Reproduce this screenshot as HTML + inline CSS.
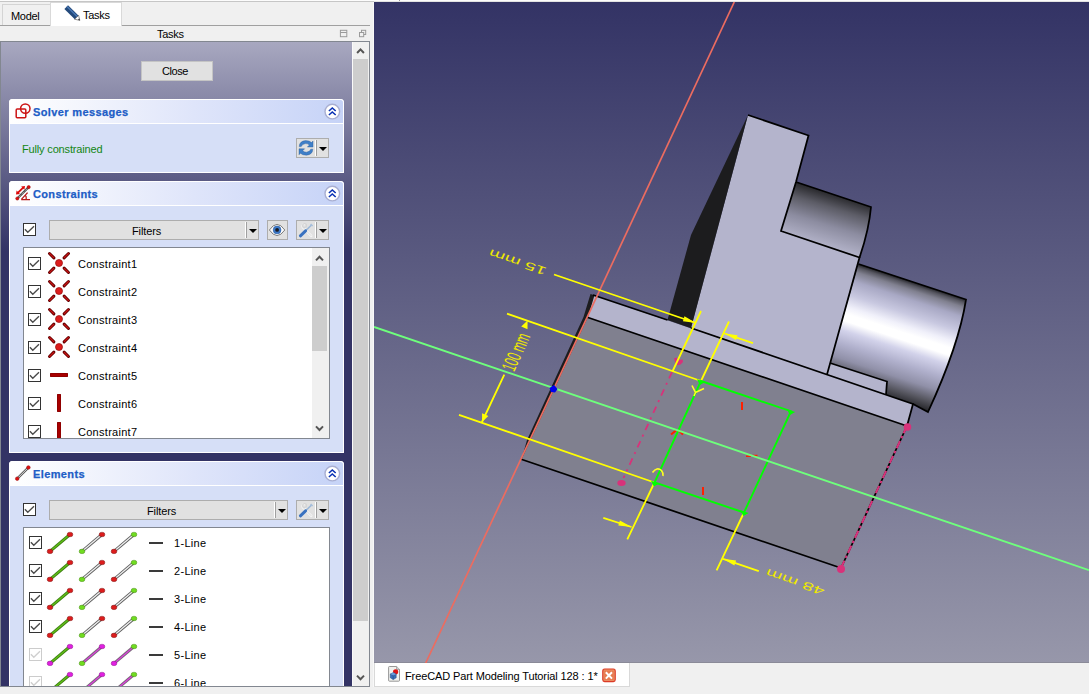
<!DOCTYPE html>
<html>
<head>
<meta charset="utf-8">
<title>FreeCAD</title>
<style>
*{box-sizing:border-box;margin:0;padding:0}
html,body{width:1089px;height:694px;overflow:hidden;background:#f0f0f0}
body{position:relative;font-family:"Liberation Sans",sans-serif;font-size:11px;color:#000}
.a{position:absolute}
.t{position:absolute;white-space:nowrap;line-height:13px;height:13px}
/* top strip */
#topw{left:0;top:0;width:1089px;height:1px;background:#fcfcfc}
#topg{left:0;top:1px;width:1089px;height:1px;background:#c6c6c6}
/* tabs */
#tabline{left:0;top:25px;width:370px;height:1px;background:#a0a0a0}
#tabModel{left:2px;top:4px;width:49px;height:21px;border:1px solid #d4d4d4;border-bottom:none;background:#f0f0f0}
#tabTasks{left:50px;top:2px;width:72px;height:24px;background:#fff;border:1px solid #d9d9d9;border-bottom:none}
/* panel frame */
#frame{left:0;top:41px;width:370px;height:646px;border:1px solid #828790;background:#333365;overflow:hidden}
#grad{left:0;top:0;width:351px;height:644px;background:linear-gradient(to bottom,#a8a8c0 0px,#333365 209px,#333365 100%)}
#vsb{left:351px;top:0;width:17px;height:644px;background:#f0f0f0;box-shadow:inset 1px 0 0 #fafafa}
#vsbthumb{left:1px;top:17px;width:15px;height:562px;background:#cdcdcd}
/* buttons */
.btn{position:absolute;background:#e1e1e1;border:1px solid #adadad}
.sepw{position:absolute;width:1px;background:#fff}
.sepg{position:absolute;width:1px;background:#a0a0a0}
.dd{position:absolute;width:0;height:0;border-left:4px solid transparent;border-right:4px solid transparent;border-top:4.5px solid #000}
/* groups */
.ghead{position:absolute;left:8px;width:335px;height:24px;border-radius:4px 4px 0 0;box-shadow:inset 0 1px 0 #fff,inset -1px 0 0 #fff,inset 1px 0 0 #fff;background:linear-gradient(to right,#ffffff 0%,#f4f6fd 20%,#dfe5fa 55%,#c6d3f7 100%)}
.gbody{position:absolute;left:8px;width:335px;background:#d6dff7;border:1px solid #fff}
.gtitle{position:absolute;font-weight:bold;color:#215dc6;-webkit-text-stroke:0.25px #215dc6;left:24px;top:7px;line-height:13px;white-space:nowrap}
.chev{position:absolute;left:314px;top:3px;width:18px;height:18px}
.cb{position:absolute;width:13px;height:13px;border:1px solid #333;background:#fff}
.cb.dis{border-color:#cccccc}
.list{position:absolute;left:22px;width:307px;background:#fff;border:1px solid #828790;overflow:hidden}
.row{position:absolute;left:0;width:306px;height:28px}
#tModel{letter-spacing:-0.29px}#tTasks,#tTitle{letter-spacing:-0.27px}#tClose{letter-spacing:-0.42px}
#gSolver{letter-spacing:0.37px}#gConstr{letter-spacing:0.35px}#gElem{letter-spacing:0.38px}
#tFully{letter-spacing:-0.16px}#tFil1,#tFil2{letter-spacing:-0.12px}
.tc{letter-spacing:0.28px}.te{letter-spacing:0.32px}#tDoc{letter-spacing:-0.11px}
</style>
</head>
<body>
<div class="a" id="topw"></div><div class="a" id="topg"></div><div class="a" style="left:374px;top:1px;width:715px;height:1px;background:#e2e2e2"></div><div class="a" style="left:399px;top:0;width:1px;height:1px;background:#9a9a9a"></div>
<div class="a" id="tabline"></div>
<div class="a" id="tabModel"></div>
<div class="a" id="tabTasks"></div>
<div class="t" id="tModel" style="left:11px;top:10px">Model</div>
<div class="t" id="tTasks" style="left:83px;top:9px">Tasks</div>
<div class="t" id="tTitle" style="left:157px;top:28px">Tasks</div>
<svg class="a" style="left:60px;top:3px" width="24" height="21" viewBox="60 3 24 21"><line x1="66.2" y1="7.2" x2="76.6" y2="17.4" stroke="#244a7c" stroke-width="5.2"/><line x1="67" y1="6.6" x2="77.4" y2="16.8" stroke="#4a78b4" stroke-width="1.4"/><polygon points="74.6,19.2 78.6,15.4 79.8,20.4" fill="#fff" stroke="#444" stroke-width="0.6"/><polygon points="78,19.4 79.2,18.4 79.9,20.5" fill="#222"/></svg><svg class="a" style="left:338px;top:28px" width="32" height="11" viewBox="338 28 32 11"><rect x="340.4" y="30.3" width="6.4" height="6.4" fill="none" stroke="#9a9a9a" stroke-width="1"/><line x1="340.4" y1="32.5" x2="346.8" y2="32.5" stroke="#9a9a9a" stroke-width="1"/><rect x="361.5" y="30.3" width="4.2" height="4.2" fill="none" stroke="#9a9a9a" stroke-width="1"/><rect x="359.5" y="32.5" width="4.2" height="4.2" fill="#f0f0f0" stroke="#9a9a9a" stroke-width="1"/></svg>
<div class="a" id="frame">
  <div class="a" id="grad"></div>
  <div class="a" id="vsb"><div class="a" id="vsbthumb"></div>
  <svg class="a" style="left:0;top:0" width="17" height="644" viewBox="352 42 17 644"><path d="M357.1,53 L360.5,49.4 L363.9,53" fill="none" stroke="#555" stroke-width="2"/><path d="M357,675.6 L360.5,679.2 L364,675.6" fill="none" stroke="#555" stroke-width="2"/></svg>
  </div>
  <div class="btn" id="closeBtn" style="left:139.5px;top:19px;width:72px;height:20px;border-color:#c4c4c4"></div>
  <div class="t" id="tClose" style="left:161px;top:23px">Close</div>
<div class="ghead" style="top:57px"><svg class="a" style="left:5px;top:3px" width="20" height="18" viewBox="14 102 20 18"><rect x="16.2" y="109" width="9.6" height="8.8" rx="1" fill="none" stroke="#cc1414" stroke-width="1.5"/><circle cx="25.3" cy="108.6" r="4.7" fill="none" stroke="#cc1414" stroke-width="1.5"/></svg><div class="gtitle" id="gSolver">Solver messages</div><svg class="chev" viewBox="0 0 18 18"><circle cx="9.3" cy="9.6" r="7.3" fill="#fff" stroke="#a9afd2" stroke-width="1.4"/><path d="M5.9 9 L9.3 6 L12.7 9 M5.9 13 L9.3 10 L12.7 13" fill="none" stroke="#0a32b4" stroke-width="1.6"/></svg></div>
<div class="gbody" style="top:81px;height:50px"></div>
<div class="t" id="tFully" style="left:21px;top:101px;color:#128612">Fully constrained</div>
<div class="btn" style="left:295px;top:96px;width:33px;height:20px"><div class="sepw" style="left:18px;top:1px;height:16px"></div><div class="sepg" style="left:19px;top:1px;height:16px"></div><div class="dd" style="left:21.5px;top:8px"></div><svg class="a" style="left:1px;top:0px" width="16" height="18" viewBox="298 139 16 18"><path d="M299.2,146.6 Q299.4,141.2 305.6,140.6 Q309.6,140.6 311.6,142.6 L313,141 L313,147 L307.4,147 L309.4,145 Q307.6,143.4 305.4,143.6 Q302,144 301.2,146.6 Z" fill="#3f7fc8" stroke="#2a5a9a" stroke-width="0.4"/><path d="M312.8,149.2 Q312.6,154.6 306.4,155.2 Q302.4,155.2 300.4,153.2 L299,154.8 L299,148.8 L304.6,148.8 L302.6,150.8 Q304.4,152.4 306.6,152.2 Q310,151.8 310.8,149.2 Z" fill="#3f7fc8" stroke="#2a5a9a" stroke-width="0.4"/></svg></div>
<div class="ghead" style="top:139px"><svg class="a" style="left:5px;top:3px" width="20" height="18" viewBox="14 184 20 18"><line x1="17.5" y1="198.3" x2="28.5" y2="187.3" stroke="#444" stroke-width="2.2"/><line x1="17.5" y1="198.3" x2="28.5" y2="187.3" stroke="#ddd" stroke-width="1" stroke-dasharray="1 1"/><circle cx="17.3" cy="198.5" r="1.6" fill="#dd1010" stroke="#900" stroke-width="0.5"/><circle cx="28.7" cy="187.1" r="1.6" fill="#dd1010" stroke="#900" stroke-width="0.5"/><line x1="17.8" y1="192.8" x2="23.2" y2="187.6" stroke="#dd0808" stroke-width="1.8"/><polygon points="16,194.6 16.6,190.6 20,194" fill="#dd0808"/><polygon points="25,185.9 24.4,189.8 21.1,186.5" fill="#dd0808"/><path d="M21.2,199.6 L30,199.6 M21.4,199.4 L27.6,192.6 M26.2,199.4 Q26.6,196.2 25.2,195.2" fill="none" stroke="#b81818" stroke-width="1.3"/></svg><div class="gtitle" id="gConstr">Constraints</div><svg class="chev" viewBox="0 0 18 18"><circle cx="9.3" cy="9.6" r="7.3" fill="#fff" stroke="#a9afd2" stroke-width="1.4"/><path d="M5.9 9 L9.3 6 L12.7 9 M5.9 13 L9.3 10 L12.7 13" fill="none" stroke="#0a32b4" stroke-width="1.6"/></svg></div>
<div class="gbody" style="top:163px;height:248px"></div>
<div class="cb" style="left:22px;top:181px"><svg class="a" style="left:0;top:0" width="11" height="11" viewBox="0 0 11 11"><path d="M0.9 5.2 L3.8 8.3 L10 2.2" fill="none" stroke="#4a4a4a" stroke-width="1.35"/></svg></div>
<div class="btn" style="left:48px;top:178px;width:210px;height:20px"><div class="sepw" style="left:195px;top:1px;height:16px"></div><div class="sepg" style="left:196px;top:1px;height:16px"></div><div class="dd" style="left:198.5px;top:8px"></div></div>
<div class="t" id="tFil1" style="left:131px;top:183px">Filters</div>
<div class="btn" style="left:266px;top:178px;width:21px;height:20px"><svg class="a" style="left:0px;top:1px" width="19" height="16" viewBox="268 222 19 16"><path d="M269.4,230 Q277,218.8 284.8,230 Q277,241.2 269.4,230 Z" fill="#fbfbfb" stroke="#7c7c7c" stroke-width="1"/><circle cx="277.1" cy="229.9" r="3.9" fill="#3d7ac8"/><circle cx="277.1" cy="229.9" r="3.9" fill="none" stroke="#2c5ea6" stroke-width="0.6"/><circle cx="277.1" cy="229.9" r="1.9" fill="#1c1c24"/></svg></div>
<div class="btn" style="left:295px;top:178px;width:33px;height:20px"><div class="sepw" style="left:18px;top:1px;height:16px"></div><div class="sepg" style="left:19px;top:1px;height:16px"></div><div class="dd" style="left:21.5px;top:8px"></div><svg class="a" style="left:1px;top:1px" width="16" height="16" viewBox="298 222 16 16"><path d="M303.4,224.6 Q301.6,226.6 303.8,228.2 L311.2,235.8" fill="none" stroke="#f4f4f4" stroke-width="2.6" stroke-linecap="round"/><path d="M303.4,224.6 Q301.6,226.6 303.8,228.2 L311.2,235.8" fill="none" stroke="#cfcfcf" stroke-width="0.7"/><circle cx="304.6" cy="225.4" r="1.9" fill="none" stroke="#d4d4d4" stroke-width="1.2"/><line x1="305.6" y1="230.8" x2="311.8" y2="224.8" stroke="#9cb8d8" stroke-width="1.6"/><line x1="310.6" y1="224.2" x2="312.6" y2="226" stroke="#a8c0dc" stroke-width="1.6"/><line x1="300.4" y1="235.8" x2="305.6" y2="230.8" stroke="#3a72c0" stroke-width="3" stroke-linecap="round"/></svg></div>
<div class="list" style="top:205px;height:192px"><div class="row" style="top:1px"><div class="cb" style="left:4px;top:8px"><svg class="a" style="left:0;top:0" width="11" height="11" viewBox="0 0 11 11"><path d="M0.9 5.2 L3.8 8.3 L10 2.2" fill="none" stroke="#4a4a4a" stroke-width="1.35"/></svg></div><svg class="a" style="left:22px;top:2px" width="26" height="24" viewBox="-13 -12 26 24"><line x1="-5.1" y1="-5.1" x2="-9.5" y2="-9.5" stroke="#640000" stroke-width="3" stroke-linecap="round"/><line x1="-5.3" y1="-5.3" x2="-9.3" y2="-9.3" stroke="#d01414" stroke-width="1.2" stroke-linecap="round"/><line x1="5.1" y1="-5.1" x2="9.5" y2="-9.5" stroke="#640000" stroke-width="3" stroke-linecap="round"/><line x1="5.3" y1="-5.3" x2="9.3" y2="-9.3" stroke="#d01414" stroke-width="1.2" stroke-linecap="round"/><line x1="-5.1" y1="5.1" x2="-9.5" y2="9.5" stroke="#640000" stroke-width="3" stroke-linecap="round"/><line x1="-5.3" y1="5.3" x2="-9.3" y2="9.3" stroke="#d01414" stroke-width="1.2" stroke-linecap="round"/><line x1="5.1" y1="5.1" x2="9.5" y2="9.5" stroke="#640000" stroke-width="3" stroke-linecap="round"/><line x1="5.3" y1="5.3" x2="9.3" y2="9.3" stroke="#d01414" stroke-width="1.2" stroke-linecap="round"/><circle cx="0" cy="0" r="3.5" fill="#dc1c1c" stroke="#9a0c0c" stroke-width="0.7"/></svg><div class="t tc" style="left:54px;top:9px">Constraint1</div></div><div class="row" style="top:29px"><div class="cb" style="left:4px;top:8px"><svg class="a" style="left:0;top:0" width="11" height="11" viewBox="0 0 11 11"><path d="M0.9 5.2 L3.8 8.3 L10 2.2" fill="none" stroke="#4a4a4a" stroke-width="1.35"/></svg></div><svg class="a" style="left:22px;top:2px" width="26" height="24" viewBox="-13 -12 26 24"><line x1="-5.1" y1="-5.1" x2="-9.5" y2="-9.5" stroke="#640000" stroke-width="3" stroke-linecap="round"/><line x1="-5.3" y1="-5.3" x2="-9.3" y2="-9.3" stroke="#d01414" stroke-width="1.2" stroke-linecap="round"/><line x1="5.1" y1="-5.1" x2="9.5" y2="-9.5" stroke="#640000" stroke-width="3" stroke-linecap="round"/><line x1="5.3" y1="-5.3" x2="9.3" y2="-9.3" stroke="#d01414" stroke-width="1.2" stroke-linecap="round"/><line x1="-5.1" y1="5.1" x2="-9.5" y2="9.5" stroke="#640000" stroke-width="3" stroke-linecap="round"/><line x1="-5.3" y1="5.3" x2="-9.3" y2="9.3" stroke="#d01414" stroke-width="1.2" stroke-linecap="round"/><line x1="5.1" y1="5.1" x2="9.5" y2="9.5" stroke="#640000" stroke-width="3" stroke-linecap="round"/><line x1="5.3" y1="5.3" x2="9.3" y2="9.3" stroke="#d01414" stroke-width="1.2" stroke-linecap="round"/><circle cx="0" cy="0" r="3.5" fill="#dc1c1c" stroke="#9a0c0c" stroke-width="0.7"/></svg><div class="t tc" style="left:54px;top:9px">Constraint2</div></div><div class="row" style="top:57px"><div class="cb" style="left:4px;top:8px"><svg class="a" style="left:0;top:0" width="11" height="11" viewBox="0 0 11 11"><path d="M0.9 5.2 L3.8 8.3 L10 2.2" fill="none" stroke="#4a4a4a" stroke-width="1.35"/></svg></div><svg class="a" style="left:22px;top:2px" width="26" height="24" viewBox="-13 -12 26 24"><line x1="-5.1" y1="-5.1" x2="-9.5" y2="-9.5" stroke="#640000" stroke-width="3" stroke-linecap="round"/><line x1="-5.3" y1="-5.3" x2="-9.3" y2="-9.3" stroke="#d01414" stroke-width="1.2" stroke-linecap="round"/><line x1="5.1" y1="-5.1" x2="9.5" y2="-9.5" stroke="#640000" stroke-width="3" stroke-linecap="round"/><line x1="5.3" y1="-5.3" x2="9.3" y2="-9.3" stroke="#d01414" stroke-width="1.2" stroke-linecap="round"/><line x1="-5.1" y1="5.1" x2="-9.5" y2="9.5" stroke="#640000" stroke-width="3" stroke-linecap="round"/><line x1="-5.3" y1="5.3" x2="-9.3" y2="9.3" stroke="#d01414" stroke-width="1.2" stroke-linecap="round"/><line x1="5.1" y1="5.1" x2="9.5" y2="9.5" stroke="#640000" stroke-width="3" stroke-linecap="round"/><line x1="5.3" y1="5.3" x2="9.3" y2="9.3" stroke="#d01414" stroke-width="1.2" stroke-linecap="round"/><circle cx="0" cy="0" r="3.5" fill="#dc1c1c" stroke="#9a0c0c" stroke-width="0.7"/></svg><div class="t tc" style="left:54px;top:9px">Constraint3</div></div><div class="row" style="top:85px"><div class="cb" style="left:4px;top:8px"><svg class="a" style="left:0;top:0" width="11" height="11" viewBox="0 0 11 11"><path d="M0.9 5.2 L3.8 8.3 L10 2.2" fill="none" stroke="#4a4a4a" stroke-width="1.35"/></svg></div><svg class="a" style="left:22px;top:2px" width="26" height="24" viewBox="-13 -12 26 24"><line x1="-5.1" y1="-5.1" x2="-9.5" y2="-9.5" stroke="#640000" stroke-width="3" stroke-linecap="round"/><line x1="-5.3" y1="-5.3" x2="-9.3" y2="-9.3" stroke="#d01414" stroke-width="1.2" stroke-linecap="round"/><line x1="5.1" y1="-5.1" x2="9.5" y2="-9.5" stroke="#640000" stroke-width="3" stroke-linecap="round"/><line x1="5.3" y1="-5.3" x2="9.3" y2="-9.3" stroke="#d01414" stroke-width="1.2" stroke-linecap="round"/><line x1="-5.1" y1="5.1" x2="-9.5" y2="9.5" stroke="#640000" stroke-width="3" stroke-linecap="round"/><line x1="-5.3" y1="5.3" x2="-9.3" y2="9.3" stroke="#d01414" stroke-width="1.2" stroke-linecap="round"/><line x1="5.1" y1="5.1" x2="9.5" y2="9.5" stroke="#640000" stroke-width="3" stroke-linecap="round"/><line x1="5.3" y1="5.3" x2="9.3" y2="9.3" stroke="#d01414" stroke-width="1.2" stroke-linecap="round"/><circle cx="0" cy="0" r="3.5" fill="#dc1c1c" stroke="#9a0c0c" stroke-width="0.7"/></svg><div class="t tc" style="left:54px;top:9px">Constraint4</div></div><div class="row" style="top:113px"><div class="cb" style="left:4px;top:8px"><svg class="a" style="left:0;top:0" width="11" height="11" viewBox="0 0 11 11"><path d="M0.9 5.2 L3.8 8.3 L10 2.2" fill="none" stroke="#4a4a4a" stroke-width="1.35"/></svg></div><div class="a" style="left:26px;top:12px;width:18px;height:4px;border-radius:1px;background:#a80000;box-shadow:inset 0 0 0 0.5px #780000"></div><div class="t tc" style="left:54px;top:9px">Constraint5</div></div><div class="row" style="top:141px"><div class="cb" style="left:4px;top:8px"><svg class="a" style="left:0;top:0" width="11" height="11" viewBox="0 0 11 11"><path d="M0.9 5.2 L3.8 8.3 L10 2.2" fill="none" stroke="#4a4a4a" stroke-width="1.35"/></svg></div><div class="a" style="left:33px;top:5px;width:4px;height:18px;border-radius:1px;background:#a80000;box-shadow:inset 0 0 0 0.5px #780000"></div><div class="t tc" style="left:54px;top:9px">Constraint6</div></div><div class="row" style="top:169px"><div class="cb" style="left:4px;top:8px"><svg class="a" style="left:0;top:0" width="11" height="11" viewBox="0 0 11 11"><path d="M0.9 5.2 L3.8 8.3 L10 2.2" fill="none" stroke="#4a4a4a" stroke-width="1.35"/></svg></div><div class="a" style="left:33px;top:5px;width:4px;height:18px;border-radius:1px;background:#a80000;box-shadow:inset 0 0 0 0.5px #780000"></div><div class="t tc" style="left:54px;top:9px">Constraint7</div></div><div class="a" style="left:288px;top:0;width:17px;height:191px;background:#f0f0f0"><div class="a" style="left:0;top:18px;width:15px;height:85px;background:#cdcdcd"></div><svg class="a" style="left:0;top:0" width="17" height="191" viewBox="312 248 17 191"><path d="M316,260.4 L319.5,256.8 L323,260.4" fill="none" stroke="#555" stroke-width="2"/><path d="M316,426.4 L319.5,430 L323,426.4" fill="none" stroke="#555" stroke-width="2"/></svg></div></div>
<div class="ghead" style="top:419px"><svg class="a" style="left:5px;top:3px" width="20" height="18" viewBox="14 464 20 18"><line x1="17.2" y1="478.6" x2="28.3" y2="467.6" stroke="#555" stroke-width="2.4"/><line x1="17.2" y1="478.6" x2="28.3" y2="467.6" stroke="#e8e8e8" stroke-width="0.9"/><circle cx="17.2" cy="478.7" r="1.8" fill="#dd1010" stroke="#900" stroke-width="0.5"/><circle cx="28.4" cy="467.5" r="1.8" fill="#dd1010" stroke="#900" stroke-width="0.5"/></svg><div class="gtitle" id="gElem">Elements</div><svg class="chev" viewBox="0 0 18 18"><circle cx="9.3" cy="9.6" r="7.3" fill="#fff" stroke="#a9afd2" stroke-width="1.4"/><path d="M5.9 9 L9.3 6 L12.7 9 M5.9 13 L9.3 10 L12.7 13" fill="none" stroke="#0a32b4" stroke-width="1.6"/></svg></div>
<div class="gbody" style="top:443px;height:230px"></div>
<div class="cb" style="left:22px;top:461px"><svg class="a" style="left:0;top:0" width="11" height="11" viewBox="0 0 11 11"><path d="M0.9 5.2 L3.8 8.3 L10 2.2" fill="none" stroke="#4a4a4a" stroke-width="1.35"/></svg></div>
<div class="btn" style="left:48px;top:458px;width:239px;height:20px"><div class="sepw" style="left:224px;top:1px;height:16px"></div><div class="sepg" style="left:225px;top:1px;height:16px"></div><div class="dd" style="left:227.5px;top:8px"></div></div>
<div class="t" id="tFil2" style="left:146px;top:463px">Filters</div>
<div class="btn" style="left:295px;top:458px;width:33px;height:20px"><div class="sepw" style="left:18px;top:1px;height:16px"></div><div class="sepg" style="left:19px;top:1px;height:16px"></div><div class="dd" style="left:21.5px;top:8px"></div><svg class="a" style="left:1px;top:1px" width="16" height="16" viewBox="298 222 16 16"><path d="M303.4,224.6 Q301.6,226.6 303.8,228.2 L311.2,235.8" fill="none" stroke="#f4f4f4" stroke-width="2.6" stroke-linecap="round"/><path d="M303.4,224.6 Q301.6,226.6 303.8,228.2 L311.2,235.8" fill="none" stroke="#cfcfcf" stroke-width="0.7"/><circle cx="304.6" cy="225.4" r="1.9" fill="none" stroke="#d4d4d4" stroke-width="1.2"/><line x1="305.6" y1="230.8" x2="311.8" y2="224.8" stroke="#9cb8d8" stroke-width="1.6"/><line x1="310.6" y1="224.2" x2="312.6" y2="226" stroke="#a8c0dc" stroke-width="1.6"/><line x1="300.4" y1="235.8" x2="305.6" y2="230.8" stroke="#3a72c0" stroke-width="3" stroke-linecap="round"/></svg></div>
<div class="list" style="top:485px;height:200px"><div class="row" style="top:1px"><div class="cb" style="left:5px;top:7px"><svg class="a" style="left:0;top:0" width="11" height="11" viewBox="0 0 11 11"><path d="M0.9 5.2 L3.8 8.3 L10 2.2" fill="none" stroke="#4a4a4a" stroke-width="1.35"/></svg></div><svg class="a" style="left:20px;top:0" width="96" height="28" viewBox="44 -14 96 28"><line x1="50" y1="8.4" x2="70" y2="-8.5" stroke="#3c7c10" stroke-width="3"/><line x1="51" y1="7.6" x2="69" y2="-7.7" stroke="#60c018" stroke-width="1.3"/><rect x="47.3" y="6.300000000000001" width="5.4" height="4.2" rx="1.9" fill="#dc1c1c" stroke="#8a1010" stroke-width="0.6"/><rect x="67.3" y="-10.6" width="5.4" height="4.2" rx="1.9" fill="#dc1c1c" stroke="#8a1010" stroke-width="0.6"/><line x1="82" y1="8.4" x2="102" y2="-8.5" stroke="#5c5c5c" stroke-width="3"/><line x1="83" y1="7.6" x2="101" y2="-7.7" stroke="#f0f0f0" stroke-width="1.3"/><rect x="79.3" y="6.300000000000001" width="5.4" height="4.2" rx="1.9" fill="#70dc20" stroke="#4a9412" stroke-width="0.6"/><rect x="99.3" y="-10.6" width="5.4" height="4.2" rx="1.9" fill="#dc1c1c" stroke="#8a1010" stroke-width="0.6"/><line x1="114" y1="8.4" x2="134" y2="-8.5" stroke="#5c5c5c" stroke-width="3"/><line x1="115" y1="7.6" x2="133" y2="-7.7" stroke="#f0f0f0" stroke-width="1.3"/><rect x="111.3" y="6.300000000000001" width="5.4" height="4.2" rx="1.9" fill="#dc1c1c" stroke="#8a1010" stroke-width="0.6"/><rect x="131.3" y="-10.6" width="5.4" height="4.2" rx="1.9" fill="#70dc20" stroke="#4a9412" stroke-width="0.6"/></svg><div class="a" style="left:125px;top:13px;width:14px;height:2px;background:#3a3a3a"></div><div class="t te" style="left:150px;top:8px">1-Line</div></div><div class="row" style="top:29px"><div class="cb" style="left:5px;top:7px"><svg class="a" style="left:0;top:0" width="11" height="11" viewBox="0 0 11 11"><path d="M0.9 5.2 L3.8 8.3 L10 2.2" fill="none" stroke="#4a4a4a" stroke-width="1.35"/></svg></div><svg class="a" style="left:20px;top:0" width="96" height="28" viewBox="44 -14 96 28"><line x1="50" y1="8.4" x2="70" y2="-8.5" stroke="#3c7c10" stroke-width="3"/><line x1="51" y1="7.6" x2="69" y2="-7.7" stroke="#60c018" stroke-width="1.3"/><rect x="47.3" y="6.300000000000001" width="5.4" height="4.2" rx="1.9" fill="#dc1c1c" stroke="#8a1010" stroke-width="0.6"/><rect x="67.3" y="-10.6" width="5.4" height="4.2" rx="1.9" fill="#dc1c1c" stroke="#8a1010" stroke-width="0.6"/><line x1="82" y1="8.4" x2="102" y2="-8.5" stroke="#5c5c5c" stroke-width="3"/><line x1="83" y1="7.6" x2="101" y2="-7.7" stroke="#f0f0f0" stroke-width="1.3"/><rect x="79.3" y="6.300000000000001" width="5.4" height="4.2" rx="1.9" fill="#70dc20" stroke="#4a9412" stroke-width="0.6"/><rect x="99.3" y="-10.6" width="5.4" height="4.2" rx="1.9" fill="#dc1c1c" stroke="#8a1010" stroke-width="0.6"/><line x1="114" y1="8.4" x2="134" y2="-8.5" stroke="#5c5c5c" stroke-width="3"/><line x1="115" y1="7.6" x2="133" y2="-7.7" stroke="#f0f0f0" stroke-width="1.3"/><rect x="111.3" y="6.300000000000001" width="5.4" height="4.2" rx="1.9" fill="#dc1c1c" stroke="#8a1010" stroke-width="0.6"/><rect x="131.3" y="-10.6" width="5.4" height="4.2" rx="1.9" fill="#70dc20" stroke="#4a9412" stroke-width="0.6"/></svg><div class="a" style="left:125px;top:13px;width:14px;height:2px;background:#3a3a3a"></div><div class="t te" style="left:150px;top:8px">2-Line</div></div><div class="row" style="top:57px"><div class="cb" style="left:5px;top:7px"><svg class="a" style="left:0;top:0" width="11" height="11" viewBox="0 0 11 11"><path d="M0.9 5.2 L3.8 8.3 L10 2.2" fill="none" stroke="#4a4a4a" stroke-width="1.35"/></svg></div><svg class="a" style="left:20px;top:0" width="96" height="28" viewBox="44 -14 96 28"><line x1="50" y1="8.4" x2="70" y2="-8.5" stroke="#3c7c10" stroke-width="3"/><line x1="51" y1="7.6" x2="69" y2="-7.7" stroke="#60c018" stroke-width="1.3"/><rect x="47.3" y="6.300000000000001" width="5.4" height="4.2" rx="1.9" fill="#dc1c1c" stroke="#8a1010" stroke-width="0.6"/><rect x="67.3" y="-10.6" width="5.4" height="4.2" rx="1.9" fill="#dc1c1c" stroke="#8a1010" stroke-width="0.6"/><line x1="82" y1="8.4" x2="102" y2="-8.5" stroke="#5c5c5c" stroke-width="3"/><line x1="83" y1="7.6" x2="101" y2="-7.7" stroke="#f0f0f0" stroke-width="1.3"/><rect x="79.3" y="6.300000000000001" width="5.4" height="4.2" rx="1.9" fill="#70dc20" stroke="#4a9412" stroke-width="0.6"/><rect x="99.3" y="-10.6" width="5.4" height="4.2" rx="1.9" fill="#dc1c1c" stroke="#8a1010" stroke-width="0.6"/><line x1="114" y1="8.4" x2="134" y2="-8.5" stroke="#5c5c5c" stroke-width="3"/><line x1="115" y1="7.6" x2="133" y2="-7.7" stroke="#f0f0f0" stroke-width="1.3"/><rect x="111.3" y="6.300000000000001" width="5.4" height="4.2" rx="1.9" fill="#dc1c1c" stroke="#8a1010" stroke-width="0.6"/><rect x="131.3" y="-10.6" width="5.4" height="4.2" rx="1.9" fill="#70dc20" stroke="#4a9412" stroke-width="0.6"/></svg><div class="a" style="left:125px;top:13px;width:14px;height:2px;background:#3a3a3a"></div><div class="t te" style="left:150px;top:8px">3-Line</div></div><div class="row" style="top:85px"><div class="cb" style="left:5px;top:7px"><svg class="a" style="left:0;top:0" width="11" height="11" viewBox="0 0 11 11"><path d="M0.9 5.2 L3.8 8.3 L10 2.2" fill="none" stroke="#4a4a4a" stroke-width="1.35"/></svg></div><svg class="a" style="left:20px;top:0" width="96" height="28" viewBox="44 -14 96 28"><line x1="50" y1="8.4" x2="70" y2="-8.5" stroke="#3c7c10" stroke-width="3"/><line x1="51" y1="7.6" x2="69" y2="-7.7" stroke="#60c018" stroke-width="1.3"/><rect x="47.3" y="6.300000000000001" width="5.4" height="4.2" rx="1.9" fill="#dc1c1c" stroke="#8a1010" stroke-width="0.6"/><rect x="67.3" y="-10.6" width="5.4" height="4.2" rx="1.9" fill="#dc1c1c" stroke="#8a1010" stroke-width="0.6"/><line x1="82" y1="8.4" x2="102" y2="-8.5" stroke="#5c5c5c" stroke-width="3"/><line x1="83" y1="7.6" x2="101" y2="-7.7" stroke="#f0f0f0" stroke-width="1.3"/><rect x="79.3" y="6.300000000000001" width="5.4" height="4.2" rx="1.9" fill="#70dc20" stroke="#4a9412" stroke-width="0.6"/><rect x="99.3" y="-10.6" width="5.4" height="4.2" rx="1.9" fill="#dc1c1c" stroke="#8a1010" stroke-width="0.6"/><line x1="114" y1="8.4" x2="134" y2="-8.5" stroke="#5c5c5c" stroke-width="3"/><line x1="115" y1="7.6" x2="133" y2="-7.7" stroke="#f0f0f0" stroke-width="1.3"/><rect x="111.3" y="6.300000000000001" width="5.4" height="4.2" rx="1.9" fill="#dc1c1c" stroke="#8a1010" stroke-width="0.6"/><rect x="131.3" y="-10.6" width="5.4" height="4.2" rx="1.9" fill="#70dc20" stroke="#4a9412" stroke-width="0.6"/></svg><div class="a" style="left:125px;top:13px;width:14px;height:2px;background:#3a3a3a"></div><div class="t te" style="left:150px;top:8px">4-Line</div></div><div class="row" style="top:113px"><div class="cb dis" style="left:5px;top:7px"><svg class="a" style="left:0;top:0" width="11" height="11" viewBox="0 0 11 11"><path d="M0.9 5.2 L3.8 8.3 L10 2.2" fill="none" stroke="#cfcfcf" stroke-width="1.35"/></svg></div><svg class="a" style="left:20px;top:0" width="96" height="28" viewBox="44 -14 96 28"><line x1="50" y1="8.4" x2="70" y2="-8.5" stroke="#3c7c10" stroke-width="3"/><line x1="51" y1="7.6" x2="69" y2="-7.7" stroke="#60c018" stroke-width="1.3"/><rect x="47.3" y="6.300000000000001" width="5.4" height="4.2" rx="1.9" fill="#e020e0" stroke="#981098" stroke-width="0.6"/><rect x="67.3" y="-10.6" width="5.4" height="4.2" rx="1.9" fill="#e020e0" stroke="#981098" stroke-width="0.6"/><line x1="82" y1="8.4" x2="102" y2="-8.5" stroke="#7a6a7a" stroke-width="3"/><line x1="83" y1="7.6" x2="101" y2="-7.7" stroke="#e838e8" stroke-width="1.1"/><rect x="79.3" y="6.300000000000001" width="5.4" height="4.2" rx="1.9" fill="#70dc20" stroke="#4a9412" stroke-width="0.6"/><rect x="99.3" y="-10.6" width="5.4" height="4.2" rx="1.9" fill="#e020e0" stroke="#981098" stroke-width="0.6"/><line x1="114" y1="8.4" x2="134" y2="-8.5" stroke="#7a6a7a" stroke-width="3"/><line x1="115" y1="7.6" x2="133" y2="-7.7" stroke="#e838e8" stroke-width="1.1"/><rect x="111.3" y="6.300000000000001" width="5.4" height="4.2" rx="1.9" fill="#e020e0" stroke="#981098" stroke-width="0.6"/><rect x="131.3" y="-10.6" width="5.4" height="4.2" rx="1.9" fill="#70dc20" stroke="#4a9412" stroke-width="0.6"/></svg><div class="a" style="left:125px;top:13px;width:14px;height:2px;background:#3a3a3a"></div><div class="t te" style="left:150px;top:8px">5-Line</div></div><div class="row" style="top:141px"><div class="cb dis" style="left:5px;top:7px"><svg class="a" style="left:0;top:0" width="11" height="11" viewBox="0 0 11 11"><path d="M0.9 5.2 L3.8 8.3 L10 2.2" fill="none" stroke="#cfcfcf" stroke-width="1.35"/></svg></div><svg class="a" style="left:20px;top:0" width="96" height="28" viewBox="44 -14 96 28"><line x1="50" y1="8.4" x2="70" y2="-8.5" stroke="#3c7c10" stroke-width="3"/><line x1="51" y1="7.6" x2="69" y2="-7.7" stroke="#60c018" stroke-width="1.3"/><rect x="47.3" y="6.300000000000001" width="5.4" height="4.2" rx="1.9" fill="#e020e0" stroke="#981098" stroke-width="0.6"/><rect x="67.3" y="-10.6" width="5.4" height="4.2" rx="1.9" fill="#e020e0" stroke="#981098" stroke-width="0.6"/><line x1="82" y1="8.4" x2="102" y2="-8.5" stroke="#7a6a7a" stroke-width="3"/><line x1="83" y1="7.6" x2="101" y2="-7.7" stroke="#e838e8" stroke-width="1.1"/><rect x="79.3" y="6.300000000000001" width="5.4" height="4.2" rx="1.9" fill="#70dc20" stroke="#4a9412" stroke-width="0.6"/><rect x="99.3" y="-10.6" width="5.4" height="4.2" rx="1.9" fill="#e020e0" stroke="#981098" stroke-width="0.6"/><line x1="114" y1="8.4" x2="134" y2="-8.5" stroke="#7a6a7a" stroke-width="3"/><line x1="115" y1="7.6" x2="133" y2="-7.7" stroke="#e838e8" stroke-width="1.1"/><rect x="111.3" y="6.300000000000001" width="5.4" height="4.2" rx="1.9" fill="#e020e0" stroke="#981098" stroke-width="0.6"/><rect x="131.3" y="-10.6" width="5.4" height="4.2" rx="1.9" fill="#70dc20" stroke="#4a9412" stroke-width="0.6"/></svg><div class="a" style="left:125px;top:13px;width:14px;height:2px;background:#3a3a3a"></div><div class="t te" style="left:150px;top:8px">6-Line</div></div></div>
</div>
<div class="a" style="left:373px;top:2px;width:1px;height:685px;background:#f8f8f8"></div>
<svg class="a" id="view3d" style="left:374px;top:2px" width="715" height="661" viewBox="374 2 715 661" shape-rendering="auto">
<defs>
<linearGradient id="bg" x1="0" y1="0" x2="0" y2="1"><stop offset="0" stop-color="#333365"/><stop offset="1" stop-color="#9797aa"/></linearGradient>
<linearGradient id="cylL" gradientUnits="userSpaceOnUse" x1="912" y1="281.6" x2="875" y2="394.7">
<stop offset="0" stop-color="#202024"/><stop offset="0.03" stop-color="#55555f"/><stop offset="0.07" stop-color="#80808f"/><stop offset="0.15" stop-color="#a8a8c4"/><stop offset="0.27" stop-color="#c8c8e0"/><stop offset="0.37" stop-color="#f0f0fa"/><stop offset="0.43" stop-color="#ffffff"/><stop offset="0.49" stop-color="#ffffff"/><stop offset="0.57" stop-color="#d2d2ea"/><stop offset="0.68" stop-color="#b0b0cc"/><stop offset="0.80" stop-color="#9090a8"/><stop offset="0.91" stop-color="#55555e"/><stop offset="1" stop-color="#222226"/></linearGradient>
<linearGradient id="cylS" gradientUnits="userSpaceOnUse" x1="833" y1="194.5" x2="818" y2="244">
<stop offset="0" stop-color="#2a2a2e"/><stop offset="0.25" stop-color="#5c5c66"/><stop offset="0.6" stop-color="#8c8ca0"/><stop offset="1" stop-color="#b2b2c8"/></linearGradient>
</defs>
<rect x="374" y="2" width="715" height="661" fill="url(#bg)"/>
<rect x="374" y="662" width="715" height="1" fill="#8a8a98"/>
<polygon points="586.5,317 907,426 841,568 520.5,459" fill="#80808f"/>
<polygon points="593,295 913,404 907,426 586.5,317" fill="#b4b4cc"/>
<polygon points="590.5,294 594.5,295.2 588,317 521.5,459.5 527,440 583.5,317" fill="#1c1c1e"/>
<path d="M858.5,264 L966,299.5 Q959,345 928,412 L913,404 L886,394.5 L887,381.5 L830,363 Z" fill="url(#cylL)"/>
<path d="M796,182 L871,207 Q869,230 859.5,257.5 L781,231 Z" fill="url(#cylS)"/>
<polygon points="830,363 887,381.5 886,394.5 827,374.5" fill="#b4b4cc"/>
<polygon points="748,115 808.5,135.5 796,182 781,231 859.5,257.5 827,374.5 691,327.8" fill="#b4b4cc"/>
<polygon points="748,115 691,235 667.5,320 691,328.2 748,115" fill="#1c1c1e"/>
<path d="M586.5,317 L907,426 M841,568 L520.5,459" fill="none" stroke="#000" stroke-width="1.75" stroke-linejoin="miter" stroke-linecap="butt"/>
<path d="M593,295 L667.5,320 M691,328 L913,404 L907,426" fill="none" stroke="#000" stroke-width="1.75" stroke-linejoin="miter" stroke-linecap="butt"/>
<path d="M748,115 L808.5,135.5 L796,182 L781,231 L859.5,257.5 L827,374.5" fill="none" stroke="#000" stroke-width="1.75" stroke-linejoin="miter" stroke-linecap="butt"/>
<path d="M796,182 L871,207 Q869,230 859.5,257.5" fill="none" stroke="#000" stroke-width="1.75" stroke-linejoin="miter" stroke-linecap="butt"/>
<path d="M858.5,264 L966,299.5 Q959,345 928,412 L913,404" fill="none" stroke="#000" stroke-width="1.75" stroke-linejoin="miter" stroke-linecap="butt"/>
<path d="M830,363 L887,381.5 L886,394.5" fill="none" stroke="#000" stroke-width="1.75" stroke-linejoin="miter" stroke-linecap="butt"/>
<path d="M907,426 L841,568" fill="none" stroke="#000" stroke-width="1.75" stroke-linejoin="miter" stroke-linecap="butt"/>
<path d="M907,426 L841,568" fill="none" stroke="#d8327a" stroke-width="2" stroke-dasharray="8 3 2.5 3"/>
<line x1="734.3" y1="2" x2="425.7" y2="663" stroke="#ec6c60" stroke-width="1.7"/>
<path d="M672,372 L623.5,478" fill="none" stroke="#d8327a" stroke-width="1.8" stroke-dasharray="7 5 2 5"/>
<path d="M674,358.2 L676.5,357.4 L679,360 L682.6,359.4 L683,362 L680.6,364.6 L677.4,365.2 L675.4,363.6 Z" fill="#d8327a"/>
<ellipse cx="621.5" cy="483" rx="4.2" ry="3" fill="#d8327a"/>
<circle cx="907.5" cy="427" r="3.8" fill="#d8327a"/>
<circle cx="841" cy="569" r="4" fill="#d8327a"/>
<path d="M554,274.5 L696,323 M701,311 L672.7,371 M729,321.5 L701,381 M724.5,333.5 L753,343.2 M507,313.7 L701,381 M459,414.8 L654.5,482.5 M504.3,374.6 L482,422 M654.5,482.5 L627.3,539.4 M744,512.5 L716.6,570.4 M603.3,517.8 L631.5,527 M723,558.8 L758.8,571.2" fill="none" stroke="#ffff00" stroke-width="1.8"/>
<polygon points="696.0,323.0 682.9,321.3 684.5,316.3" fill="#ffff00"/>
<polygon points="724.5,333.5 737.6,335.2 736.0,340.1" fill="#ffff00"/>
<polygon points="631.5,527.0 618.3,525.4 619.9,520.5" fill="#ffff00"/>
<polygon points="723.0,558.8 736.1,560.6 734.4,565.5" fill="#ffff00"/>
<polygon points="527.6,320.6 527.5,329.3 521.2,326.5" fill="#ffff00"/>
<polygon points="482.0,422.0 482.1,413.3 488.4,416.1" fill="#ffff00"/>
<path d="M701,381 L791,411.2 L744,512.5 L654.5,482.5 Z" fill="none" stroke="#00ff00" stroke-width="1.9"/>
<path d="M697,379.3 L705.2,382.1 L699.8,384.9 Z" fill="#00ff00"/>
<path d="M787,409.3 L795.2,412.1 L789.8,414.9 Z" fill="#00ff00"/>
<path d="M740.5,510.3 L748.7,513.1 L743.3,515.9 Z" fill="#00ff00"/>
<path d="M651,480.8 L659.2,483.6 L653.8,486.4 Z" fill="#00ff00"/>
<path d="M692,385.5 L695.5,392.5 L704,388.5 M695.5,392.5 L694,396" fill="none" stroke="#ffff20" stroke-width="1.6"/>
<path d="M652.5,472.5 Q657,466.5 661.5,470.5 Q663.5,473 663,476" fill="none" stroke="#ffff20" stroke-width="1.6"/>
<rect x="741" y="402" width="2" height="8" fill="#ff2000"/>
<rect x="702" y="487" width="2" height="8" fill="#ff2000"/>
<path d="M671,434.5 L676,430.5 M679,430.5 L683,434.5" stroke="#ff2000" stroke-width="2.2" fill="none"/>
<path d="M746,456.3 L751,456.3 M752.5,455.6 L757.5,455.6" stroke="#ff2000" stroke-width="1.6" fill="none"/>
<line x1="374" y1="327" x2="1089" y2="570.2" stroke="#6eff7c" stroke-width="1.9"/>
<path d="M549.5,388 L554,385 L557.5,389 L555,392.5 L551,392 Z" fill="#0000ee"/>
<text x="0" y="3.9" transform="matrix(-1.6839 -0.5776 0.4355 -0.9334 517.4 262.2)" font-family="Liberation Sans, sans-serif" fill="#efe800" text-anchor="middle" font-size="11">15 mm</text>
<text x="0" y="3.9" transform="matrix(-1.7217 -0.5906 0.4355 -0.9334 795 582.2)" font-family="Liberation Sans, sans-serif" fill="#efe800" text-anchor="middle" font-size="11">48 mm</text>
<text x="0" y="3.9" transform="matrix(0.4228 -0.9062 1.7028 0.5841 515.7 352)" font-family="Liberation Sans, sans-serif" fill="#efe800" text-anchor="middle" font-size="11">100 mm</text>
</svg>
<div class="a" style="left:374px;top:663px;width:256px;height:24px;background:#fff;border:1px solid #d9d9d9;border-top:none"></div><svg class="a" style="left:386px;top:664px" width="16" height="20" viewBox="386 664 16 20"><path d="M389.4,666.5 L396.6,666.5 L399.5,669.4 L399.5,680.4 Q399.5,681.2 398.7,681.2 L389.4,681.2 Q388.6,681.2 388.6,680.4 L388.6,667.3 Q388.6,666.5 389.4,666.5 Z" fill="#f1f1ee" stroke="#8c8c8c" stroke-width="0.9"/><path d="M396.6,666.5 L396.6,669.4 L399.5,669.4" fill="#d8d8d8" stroke="#8c8c8c" stroke-width="0.7"/><circle cx="395.6" cy="671.8" r="2.6" fill="#e01414"/><path d="M390.3,674 L393.4,672.6 L396.2,674.2 L396.2,677.8 L393.2,679.6 L390.3,677.8 Z" fill="#3b70b8" stroke="#234a80" stroke-width="0.5"/><path d="M390.3,674 L393.2,675.6 L396.2,674.2 M393.2,675.6 L393.2,679.6" fill="none" stroke="#234a80" stroke-width="0.5"/><path d="M390.3,674 L393.4,672.6 L396.2,674.2 L393.2,675.6 Z" fill="#6a9cd8"/></svg><div class="t" id="tDoc" style="left:405px;top:670px">FreeCAD Part Modeling Tutorial 128 : 1*</div><svg class="a" style="left:602px;top:668px" width="14" height="15" viewBox="602 668 14 15"><rect x="602.8" y="669" width="12.4" height="12.6" rx="1.8" fill="#e67c50" stroke="#dc3a26" stroke-width="1.2"/><rect x="603.9" y="670.1" width="10.2" height="10.4" rx="1" fill="none" stroke="#ec9870" stroke-width="0.6"/><path d="M605.8,672.2 L612,678.6 M612,672.2 L605.8,678.6" stroke="#fff" stroke-width="2" fill="none"/></svg>
</body>
</html>
